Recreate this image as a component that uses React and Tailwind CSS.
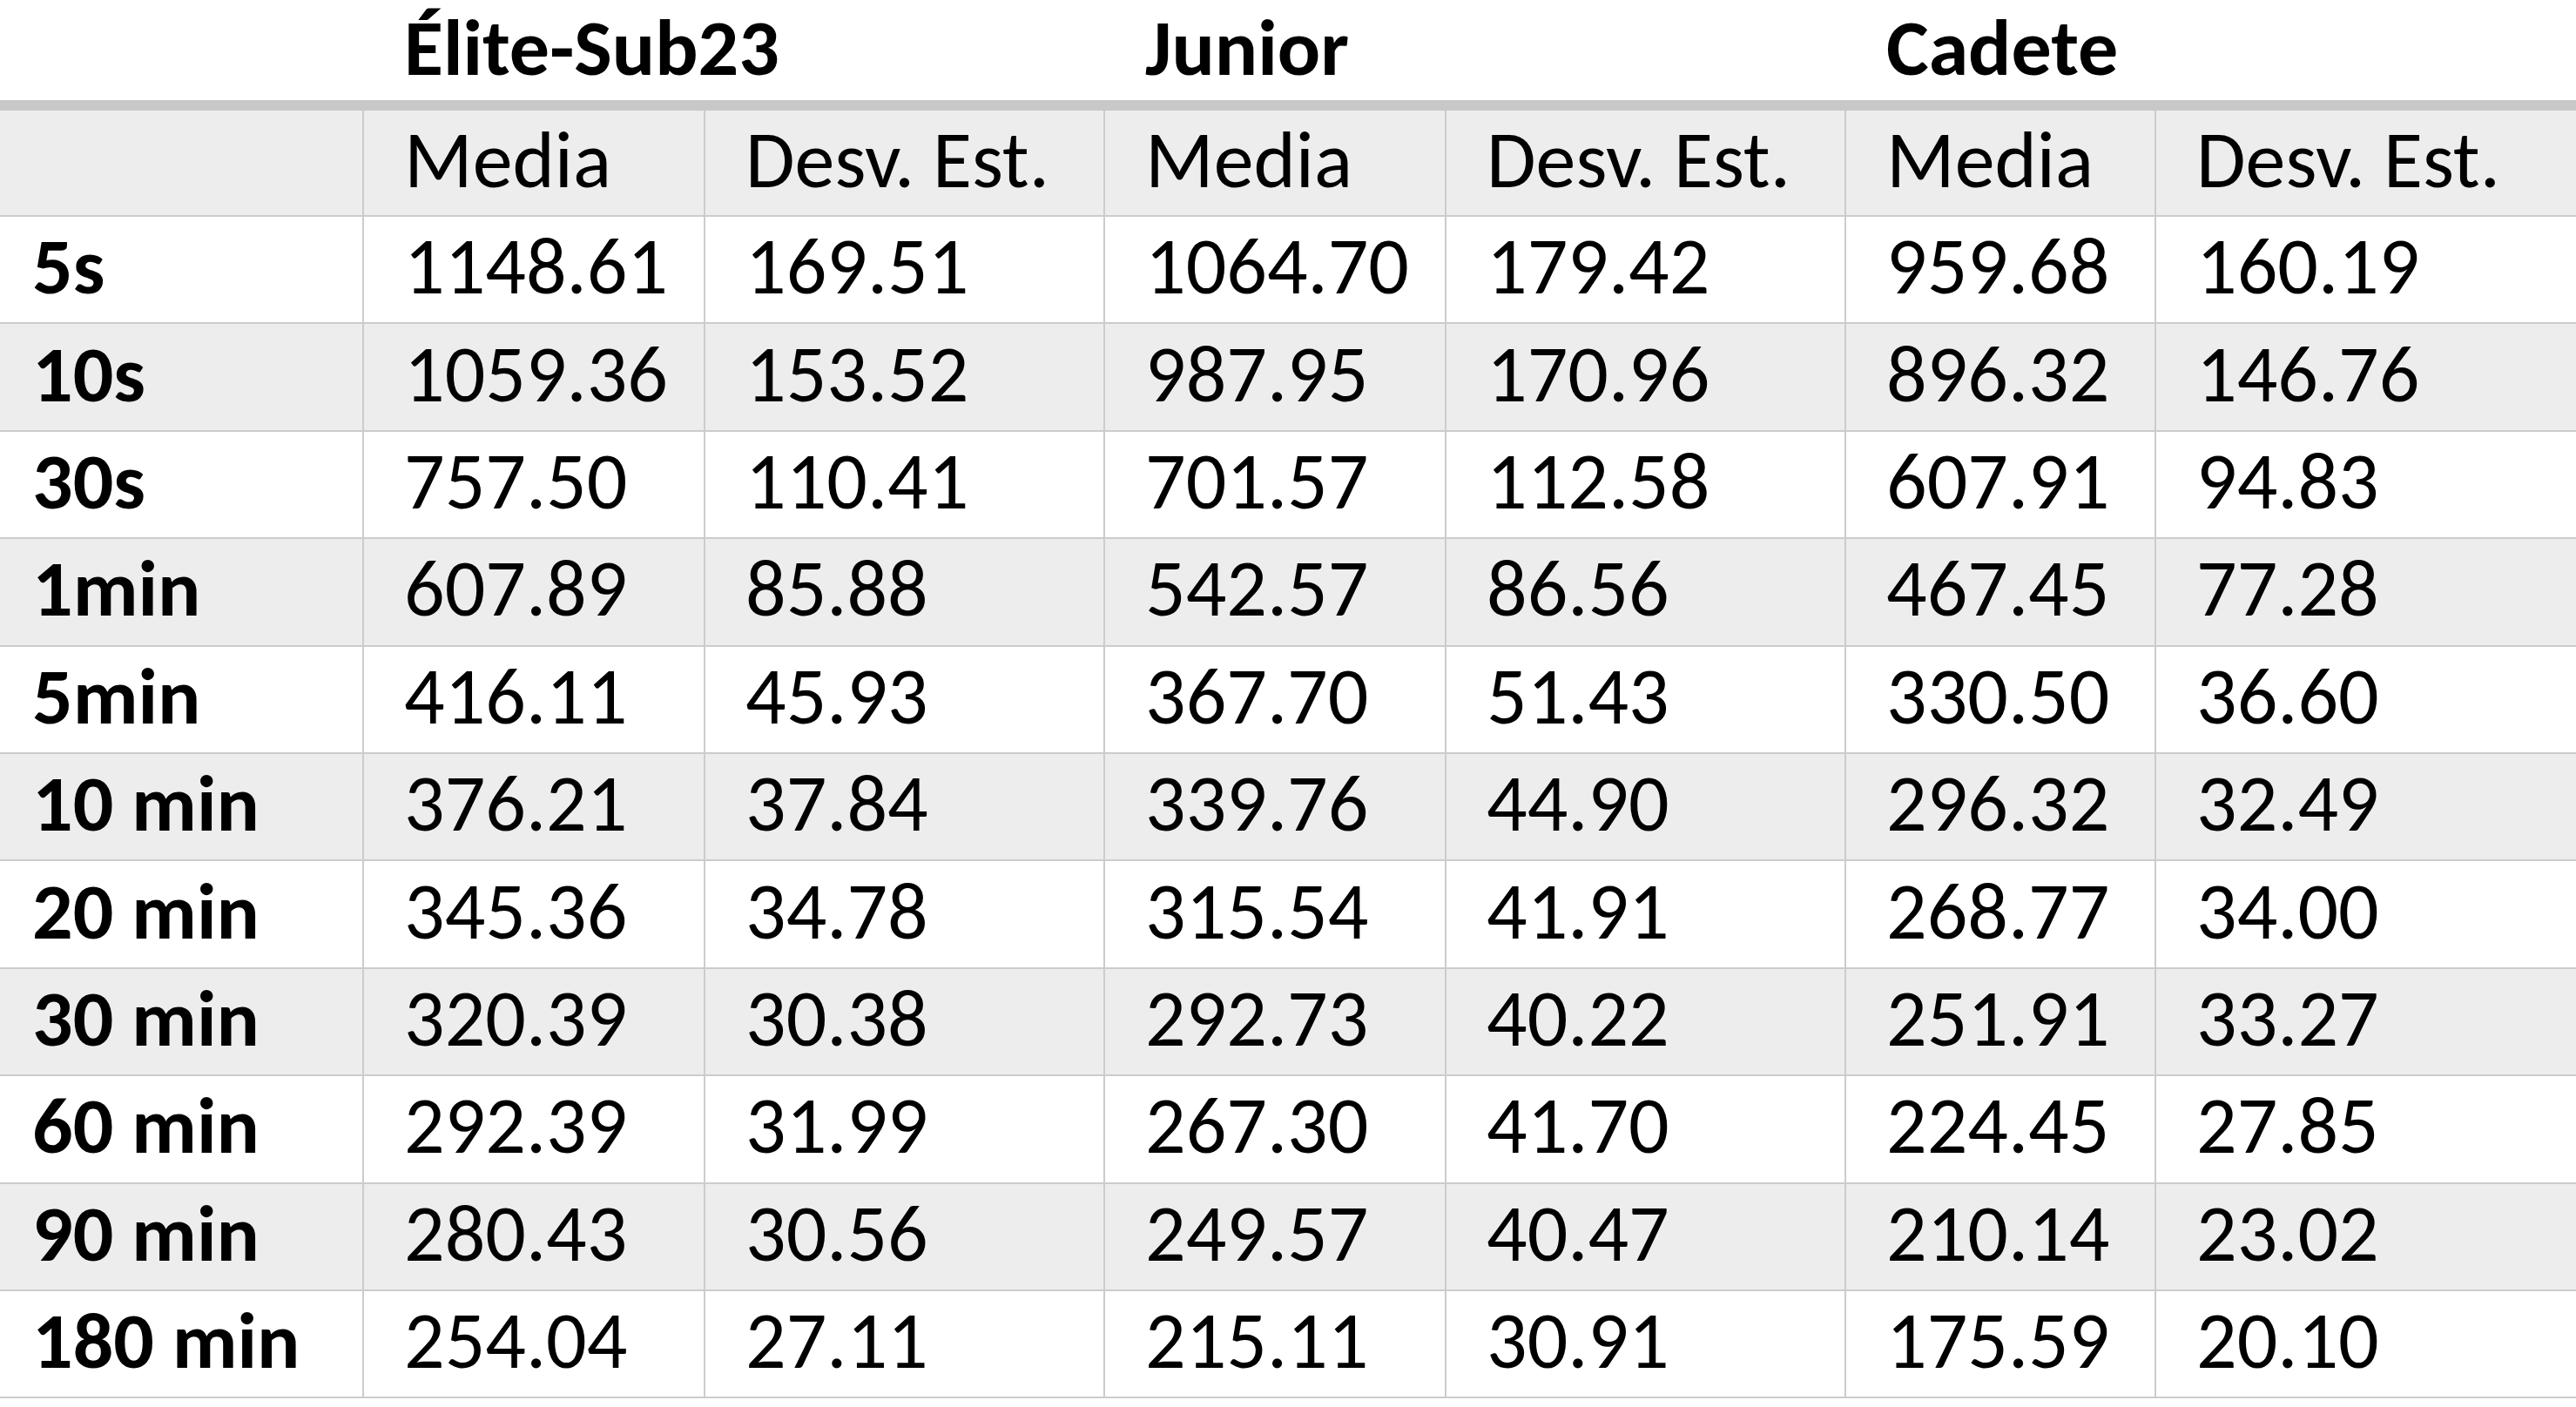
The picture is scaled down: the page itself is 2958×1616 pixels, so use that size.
import React from 'react';

const rows = [
  ['5s', '1148.61', '169.51', '1064.70', '179.42', '959.68', '160.19'],
  ['10s', '1059.36', '153.52', '987.95', '170.96', '896.32', '146.76'],
  ['30s', '757.50', '110.41', '701.57', '112.58', '607.91', '94.83'],
  ['1min', '607.89', '85.88', '542.57', '86.56', '467.45', '77.28'],
  ['5min', '416.11', '45.93', '367.70', '51.43', '330.50', '36.60'],
  ['10 min', '376.21', '37.84', '339.76', '44.90', '296.32', '32.49'],
  ['20 min', '345.36', '34.78', '315.54', '41.91', '268.77', '34.00'],
  ['30 min', '320.39', '30.38', '292.73', '40.22', '251.91', '33.27'],
  ['60 min', '292.39', '31.99', '267.30', '41.70', '224.45', '27.85'],
  ['90 min', '280.43', '30.56', '249.57', '40.47', '210.14', '23.02'],
  ['180 min', '254.04', '27.11', '215.11', '30.91', '175.59', '20.10'],
];

const cols = 'grid grid-cols-[416px_392px_459px_392px_459px_356px_1fr]';

function Cell({ children, first, bold }) {
  return (
    <div
      className={`flex items-center leading-[1.15] pb-[7px] ${
        first ? 'pl-[37px]' : 'border-l-2 border-[#cccccc] pl-[46px]'
      } ${bold ? 'font-bold' : ''}`}
    >
      {children}
    </div>
  );
}

export default function App() {
  return (
    <div className="w-[2958px] h-[1616px] bg-white text-black text-[92px] font-['Carlito','Open_Sans',sans-serif]">
      <div className={`${cols} h-[115px] font-bold`}>
        <div />
        <div className="col-span-2 flex items-center pl-[48px] pb-[6px] leading-[1.1]">Élite-Sub23</div>
        <div className="col-span-2 flex items-center pl-[48px] pb-[6px] leading-[1.1]">Junior</div>
        <div className="col-span-2 flex items-center pl-[48px] pb-[6px] leading-[1.1]">Cadete</div>
      </div>
      <div className="h-[12px] bg-[#c8c8c8]" />
      <div className={`${cols} h-[122px] bg-[#ededed] border-b-2 border-[#cccccc]`}>
        <Cell first />
        <Cell>Media</Cell>
        <Cell>Desv. Est.</Cell>
        <Cell>Media</Cell>
        <Cell>Desv. Est.</Cell>
        <Cell>Media</Cell>
        <Cell>Desv. Est.</Cell>
      </div>
      {rows.map((r, i) => (
        <div
          key={r[0]}
          className={`${cols} h-[123.4px] border-b-2 border-[#cccccc] ${
            i % 2 === 1 ? 'bg-[#ededed]' : 'bg-white'
          }`}
        >
          <Cell first bold>
            {r[0]}
          </Cell>
          {r.slice(1).map((v, j) => (
            <Cell key={j}>{v}</Cell>
          ))}
        </div>
      ))}
    </div>
  );
}
